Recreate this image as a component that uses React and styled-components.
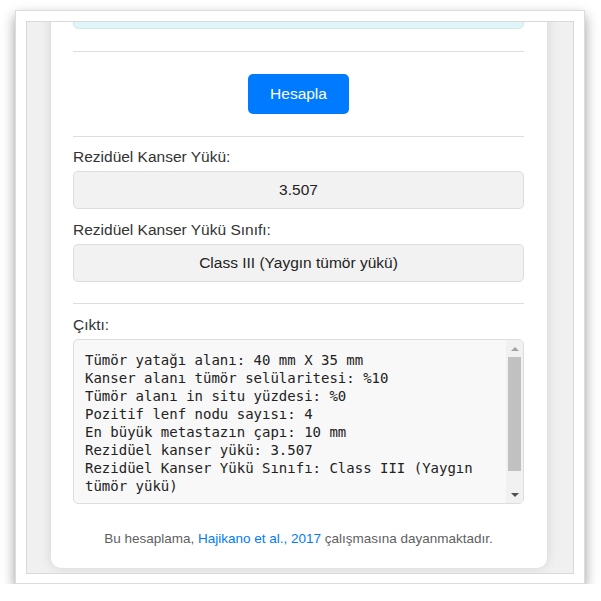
import styled, { createGlobalStyle } from 'styled-components'

let GlobalStyle = createGlobalStyle`
  html, body {
    margin: 0;
    padding: 0;
    background: #ffffff;
  }
  body {
    font-family: "Liberation Sans", Arial, sans-serif;
    color: #333;
  }
  * { box-sizing: border-box; }
`;

let Page = styled.div`
  padding: 10px 0 0 15px;
`;

let Frame = styled.div`
  width: 570px;
  height: 574px;
  background: #fff;
  border: 1px solid #dcdcdc;
  padding: 10px 10px 9px;
  display: flex;
  box-shadow: 0 6px 12px rgba(0, 0, 0, 0.4);
`;

let Viewport = styled.div`
  flex: 1;
  background: #f0f0f0;
  border: 1px solid #d9d9d9;
  overflow: hidden;
  display: flex;
  flex-direction: column;
  justify-content: flex-end;
  align-items: flex-start;
`;

let Card = styled.div`
  flex-shrink: 0;
  width: 496px;
  margin: 0 0 5px 24px;
  background: #fff;
  border-radius: 10px;
  box-shadow: 0 0 12px rgba(0, 0, 0, 0.12);
  padding: 0 23px 21px 22px;
`;

let InfoBox = styled.div`
  height: 80px;
  background: #e0f5f8;
  border: 1px solid #d2e9ec;
  border-radius: 5px;
`;

let Divider = styled.hr`
  border: none;
  border-top: 1px solid #dddddd;
  margin: ${props => props.$top || 22}px 0 0;
  height: 0;
`;

let ButtonRow = styled.div`
  display: flex;
  justify-content: center;
  margin-top: 22px;
`;

let Button = styled.button`
  background: #007bff;
  color: #fff;
  border: none;
  border-radius: 5px;
  font-family: "Liberation Sans", Arial, sans-serif;
  font-size: 15.5px;
  line-height: 20px;
  padding: 10px 22px;
  cursor: pointer;
`;

let Field = styled.div`
  margin-top: ${props => props.$top || 12}px;
`;

let Label = styled.div`
  font-size: 15.5px;
  line-height: 18px;
  color: #333;
  margin-bottom: 5px;
`;

let ResultBox = styled.div`
  height: 38px;
  background: #f2f2f2;
  border: 1px solid #dddddd;
  border-radius: 5px;
  font-size: 15.5px;
  line-height: 18px;
  padding: 9px 10px;
  text-align: center;
  color: #222;
`;

let OutputBox = styled.div`
  display: flex;
  height: 165px;
  background: #f8f8f8;
  border: 1px solid #dddddd;
  border-radius: 5px;
  overflow: hidden;
`;

let OutputText = styled.div`
  flex: 1;
  overflow: hidden;
  white-space: pre-wrap;
  font-family: "DejaVu Sans Mono", "Liberation Mono", monospace;
  font-size: 14px;
  line-height: 18px;
  color: #222;
  padding: 11px 11px;
`;

let ScrollTrack = styled.div`
  width: 17px;
  flex-shrink: 0;
  background: #f1f1f1;
  display: flex;
  flex-direction: column;
`;

let ScrollArrow = styled.div`
  height: 17px;
  display: flex;
  align-items: center;
  justify-content: center;
  &::after {
    content: '';
    width: 0;
    height: 0;
    border-left: 4px solid transparent;
    border-right: 4px solid transparent;
    ${props => props.$down
      ? `border-top: 4px solid ${props.$color};`
      : `border-bottom: 4px solid ${props.$color};`}
  }
`;

let ScrollThumb = styled.div`
  height: 114px;
  margin: 0 2px;
  background: #c1c1c1;
`;

let ScrollSpace = styled.div`
  flex: 1;
`;

let Footer = styled.p`
  margin: 27px 0 0;
  text-align: center;
  font-size: 13.5px;
  line-height: 16px;
  color: #5f5f5f;
`;

let Link = styled.a`
  color: #007bff;
  text-decoration: none;
`;

let output = `Tümör yatağı alanı: 40 mm X 35 mm
Kanser alanı tümör selülaritesi: %10
Tümör alanı in situ yüzdesi: %0
Pozitif lenf nodu sayısı: 4
En büyük metastazın çapı: 10 mm
Rezidüel kanser yükü: 3.507
Rezidüel Kanser Yükü Sınıfı: Class III (Yaygın tümör yükü)
`;

function App(){
  return(
    <Page>
      <GlobalStyle />
      <Frame>
        <Viewport>
          <Card>
            <InfoBox />
            <Divider />
            <ButtonRow>
              <Button>Hesapla</Button>
            </ButtonRow>
            <Divider />
            <Field $top={11}>
              <Label>Rezidüel Kanser Yükü:</Label>
              <ResultBox>3.507</ResultBox>
            </Field>
            <Field>
              <Label>Rezidüel Kanser Yükü Sınıfı:</Label>
              <ResultBox>Class III (Yaygın tümör yükü)</ResultBox>
            </Field>
            <Divider $top={21} />
            <Field>
              <Label>Çıktı:</Label>
              <OutputBox>
                <OutputText>{output}</OutputText>
                <ScrollTrack>
                  <ScrollArrow $color="#a3a3a3" />
                  <ScrollThumb />
                  <ScrollSpace />
                  <ScrollArrow $down $color="#505050" />
                </ScrollTrack>
              </OutputBox>
            </Field>
            <Footer>
              Bu hesaplama, <Link href="#">Hajikano et al., 2017</Link> çalışmasına dayanmaktadır.
            </Footer>
          </Card>
        </Viewport>
      </Frame>
    </Page>
  )
}

export default App
